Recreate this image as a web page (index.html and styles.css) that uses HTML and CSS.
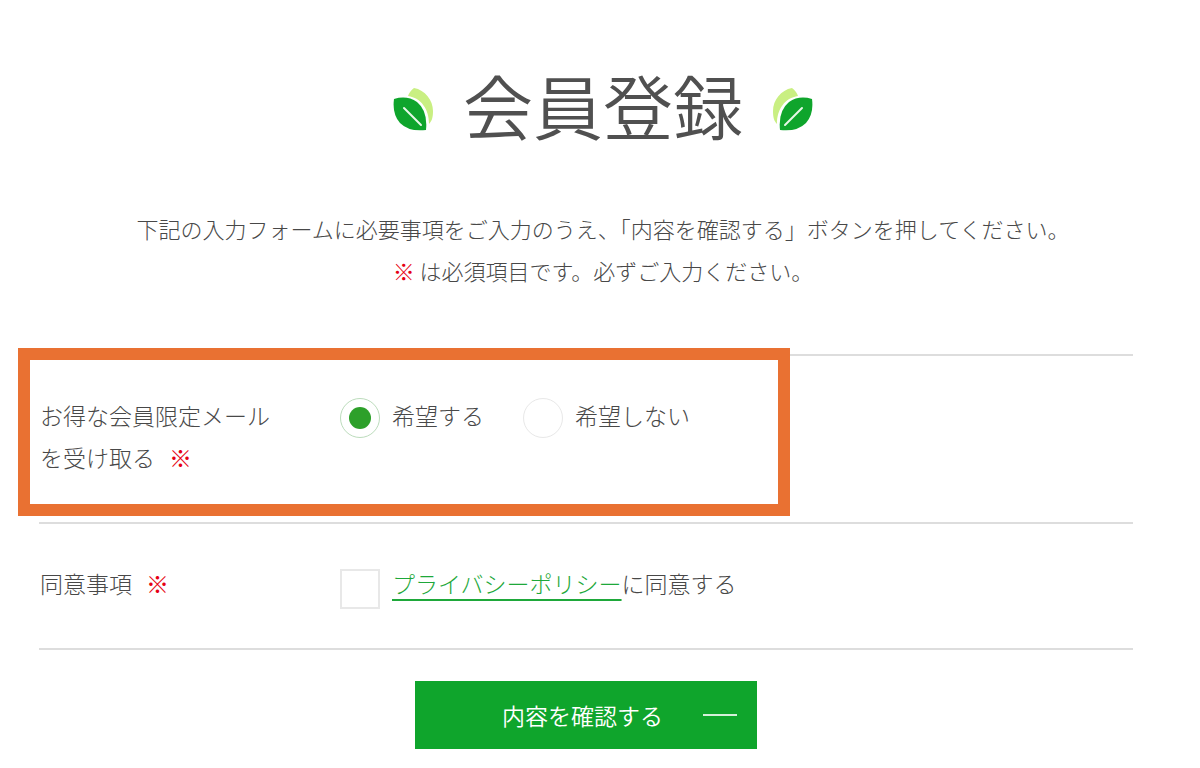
FILE: index.html
```html
<!DOCTYPE html>
<html lang="ja">
<head>
<meta charset="utf-8">
<meta name="viewport" content="width=device-width, initial-scale=1">
<title>会員登録</title>
<link rel="stylesheet" href="styles.css">
</head>
<body>
<header class="page-header">
  <div class="title-row">
    <svg class="leaf" viewBox="0 0 42 44" aria-hidden="true">
      <path class="leaf-light" d="M21 1C32 3 40 13 40 24C40 30 39 34 36 37C36 22 28 11 15 9C16 6 18 3 21 1Z"/>
      <path class="leaf-dark" d="M1 12Q14 8 24 15Q35 24 33 43Q16 45 7 36Q-1 27 1 12Z"/>
      <path class="leaf-vein" d="M11 21L28 38"/>
    </svg>
    <h1 class="title">会員登録</h1>
    <svg class="leaf leaf-right" viewBox="0 0 42 44" aria-hidden="true">
      <path class="leaf-light" d="M21 1C32 3 40 13 40 24C40 30 39 34 36 37C36 22 28 11 15 9C16 6 18 3 21 1Z"/>
      <path class="leaf-dark" d="M1 12Q14 8 24 15Q35 24 33 43Q16 45 7 36Q-1 27 1 12Z"/>
      <path class="leaf-vein" d="M11 21L28 38"/>
    </svg>
  </div>
  <p class="intro">下記の入力フォームに必要事項をご入力のうえ、「内容を確認する」ボタンを押してください。<br><span class="required">※</span> は必須項目です。必ずご入力ください。</p>
</header>
<form class="form">
  <div class="row" role="radiogroup" aria-labelledby="mail-label">
    <div class="row-label" id="mail-label">お得な会員限定メール<br>を受け取る<span class="required mark">※</span></div>
    <div class="options">
      <label class="choice"><input class="radio" type="radio" name="mail" value="yes" checked>希望する</label>
      <label class="choice"><input class="radio" type="radio" name="mail" value="no">希望しない</label>
    </div>
    <span class="highlight" aria-hidden="true"></span>
  </div>
  <div class="row row-last">
    <div class="row-label">同意事項<span class="required mark">※</span></div>
    <div class="agreement">
      <input class="checkbox" type="checkbox" id="agree">
      <label for="agree"><a class="link" href="#privacy">プライバシーポリシー</a>に同意する</label>
    </div>
  </div>
  <button class="submit" type="submit">内容を確認する<span class="dash"></span></button>
</form>
</body>
</html>
```
FILE: styles.css
```css
* {
  box-sizing: border-box;
}

body {
  margin: 0;
  background: #fff;
  color: #484848;
  font-family: "Noto Sans CJK JP", sans-serif;
  font-size: 23px;
  font-weight: 300;
  line-height: 42px;
}

.page-header {
  padding: 70px 0 0 6px;
  text-align: center;
}

.title-row {
  display: flex;
  justify-content: center;
  align-items: center;
  gap: 28px;
}

.title {
  margin: 0;
  padding-bottom: 8px;
  color: #505050;
  font-size: 70px;
  font-weight: 350;
  line-height: 70px;
}

.leaf {
  width: 42px;
  height: 44px;
}

.leaf-right {
  transform: scaleX(-1);
}

.leaf-light {
  fill: #c9ef82;
}

.leaf-dark {
  fill: #0fa52c;
}

.leaf-vein {
  fill: none;
  stroke: #e8f8e8;
  stroke-width: 2;
  stroke-linecap: round;
}

.intro {
  margin: 59px 0 63px;
  font-size: 22px;
}

.required {
  color: #e60012;
}

.form {
  padding: 0 67px 19px 39px;
}

.row {
  position: relative;
  display: grid;
  grid-template-columns: 301px 1fr;
  padding: 38px 0 44px;
  border-top: 2px solid #ddd;
}

.row-last {
  border-bottom: 2px solid #ddd;
}

.row-label {
  padding-left: 1px;
}

.mark {
  margin-left: 14px;
}

.options {
  display: flex;
  align-items: flex-start;
  gap: 39px;
}

.choice,
.agreement {
  display: flex;
  align-items: flex-start;
  gap: 12px;
}

.radio,
.checkbox {
  appearance: none;
  flex: none;
  width: 40px;
  height: 40px;
  background: #fff;
}

.radio {
  display: grid;
  place-items: center;
  margin: 4px 0 0;
  border: 1px solid #e8e8e8;
  border-radius: 50%;
}

.radio:checked {
  border-color: #bcdcbc;
}

.radio:checked::before {
  content: "";
  width: 22px;
  height: 22px;
  border-radius: 50%;
  background: #2da02a;
}

.highlight {
  position: absolute;
  top: -8px;
  left: -21px;
  width: 772px;
  height: 168px;
  border: 12px solid #e97132;
  pointer-events: none;
}

.checkbox {
  margin: 7px 0 -7px;
  border: 2px solid #e8e8e8;
}

.link {
  color: #1ea83a;
  text-decoration: underline;
  text-decoration-thickness: 2px;
  text-underline-offset: 6px;
}

.submit {
  display: flex;
  justify-content: flex-end;
  align-items: center;
  gap: 40px;
  width: 342px;
  height: 68px;
  margin: 31px auto 0;
  padding: 0 20px;
  border: 0;
  background: #0fa52c;
  color: #fff;
  font: inherit;
  font-weight: 350;
}

.dash {
  width: 34px;
  height: 2px;
  background: #d5f0da;
}
```
